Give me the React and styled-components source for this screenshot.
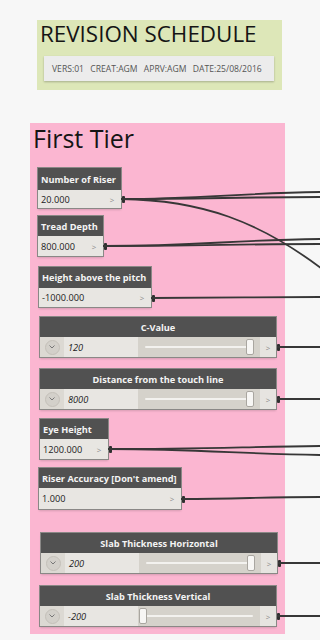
import React from "react";
import styled, { createGlobalStyle } from "styled-components";

const Global = createGlobalStyle`
  html, body { margin: 0; padding: 0; background: #f7f7f7; }
  body { font-family: "Open Sans", "Noto Sans", sans-serif; overflow: hidden; }
`;

const Canvas = styled.div`
  position: relative;
  width: 320px;
  height: 640px;
  overflow: hidden;
  background: #f7f7f7;
  display: flex;
  flex-direction: column;
`;

const Group = styled.section`
  margin-top: ${(p) => p.$top}px;
  margin-left: ${(p) => p.$left}px;
  width: ${(p) => p.$width}px;
  height: ${(p) => p.$height}px;
  flex-shrink: 0;
  background: ${(p) => p.$bg};
  display: flex;
  flex-direction: column;
  box-sizing: border-box;
`;

const GroupTitle = styled.h1`
  margin: ${(p) => p.$margin};
  font-family: "Open Sans", sans-serif;
  font-weight: 400;
  font-size: ${(p) => p.$size}px;
  line-height: ${(p) => p.$lh}px;
  height: ${(p) => p.$lh}px;
  color: #151515;
  white-space: nowrap;
`;

const Note = styled.div`
  margin: ${(p) => p.$top}px 0 0 7px;
  width: 230px;
  height: 25px;
  background: #ececec;
  box-shadow: 0 1px 2px rgba(0, 0, 0, 0.25);
  display: flex;
  align-items: center;
  padding-left: 8px;
  box-sizing: border-box;
  font-family: "Open Sans", sans-serif;
  font-size: 8.6px;
  color: #555;
  word-spacing: 4px;
  white-space: nowrap;
`;

const Node = styled.div`
  margin-top: ${(p) => p.$top}px;
  margin-left: ${(p) => p.$left}px;
  width: ${(p) => p.$width}px;
  display: flex;
  flex-direction: column;
  flex-shrink: 0;
  box-shadow: 0 0 0 1px #8a8886, 0 2px 2px rgba(0, 0, 0, 0.15);
`;

const Header = styled.div`
  height: ${(p) => p.$h || 20}px;
  background: #515151;
  color: #f4f4f4;
  font-family: "Open Sans", sans-serif;
  font-weight: 700;
  font-size: 9.2px;
  display: flex;
  align-items: center;
  justify-content: ${(p) => (p.$center ? "center" : "flex-start")};
  padding-left: ${(p) => (p.$center ? 0 : 3)}px;
  white-space: nowrap;
`;

const Row = styled.div`
  position: relative;
  height: ${(p) => p.$h || 19}px;
  background: #e8e6e2;
  display: flex;
  align-items: center;
  font-family: "Open Sans", sans-serif;
  font-size: 9.2px;
  color: #222;
`;

const ValueText = styled.span`
  flex: 1;
  padding-left: 3px;
`;

const Arrow = styled.span`
  width: ${(p) => p.$w || 18}px;
  align-self: stretch;
  display: flex;
  align-items: center;
  justify-content: center;
  color: #8a8a8a;
  font-size: 8px;
  background: ${(p) => p.$bg || "transparent"};
`;

const Port = styled.span`
  position: absolute;
  right: -4px;
  top: 50%;
  width: 3px;
  height: 7px;
  margin-top: -3px;
  background: #2f2f2f;
  border-radius: 1px;
`;

const Toggle = styled.span`
  width: 24px;
  align-self: stretch;
  background: #dcd9d3;
  display: flex;
  align-items: center;
  justify-content: center;
`;

const Circle = styled.span`
  width: 13px;
  height: 13px;
  border-radius: 50%;
  background: #d3d0ca;
  border: 1px solid #c4c0b9;
  display: flex;
  align-items: center;
  justify-content: center;
`;

const SliderVal = styled.span`
  width: 74px;
  align-self: stretch;
  display: flex;
  align-items: center;
  padding-left: 4px;
  box-sizing: border-box;
  background: #e8e6e2;
  font-style: italic;
`;

const Track = styled.span`
  position: relative;
  flex: 1;
  align-self: stretch;
  background: #d5d2cb;
  display: flex;
  align-items: center;
  padding: 0 7px;
`;

const TrackLine = styled.span`
  flex: 1;
  height: 2px;
  background: #f3f2ef;
  border-radius: 1px;
`;

const Thumb = styled.span`
  position: absolute;
  top: 2px;
  width: 6px;
  height: 14px;
  background: #f7f6f4;
  border: 1px solid #a9a6a0;
  border-radius: 2px;
`;

const Wires = styled.svg`
  position: absolute;
  left: 0;
  top: 0;
  pointer-events: none;
`;

const Chevron = () => (
  <svg width="6" height="4" viewBox="0 0 6 4">
    <path d="M0.5 0.5 L3 3 L5.5 0.5" fill="none" stroke="#777" strokeWidth="1" />
  </svg>
);

function NumberNode({ top, left, width, title, value, h = 20, rh = 19 }) {
  return (
    <Node $top={top} $left={left} $width={width}>
      <Header $h={h}>{title}</Header>
      <Row $h={rh}>
        <ValueText>{value}</ValueText>
        <Arrow>&gt;</Arrow>
        <Port />
      </Row>
    </Node>
  );
}

function SliderNode({ top, left, title, value, pos }) {
  return (
    <Node $top={top} $left={left} $width={236}>
      <Header $h={20} $center>{title}</Header>
      <Row $h={20}>
        <Toggle>
          <Circle>
            <Chevron />
          </Circle>
        </Toggle>
        <SliderVal>{value}</SliderVal>
        <Track>
          <TrackLine />
          <Thumb style={{ left: `${pos}px` }} />
        </Track>
        <Arrow $w={16} $bg="#e6e4e0">&gt;</Arrow>
        <Port />
      </Row>
    </Node>
  );
}

export default function App() {
  const wires = [
    "M121 199 C200 199, 240 193, 320 192",
    "M121 199 C200 199, 245 197, 320 197",
    "M121 199 C200 200, 260 220, 330 275",
    "M103 246 C200 246, 230 240, 320 239",
    "M103 246 C200 246, 240 244, 320 244",
    "M151 298 C230 298, 250 297, 320 297",
    "M277 347 L320 347",
    "M277 399 L320 399",
    "M108 449 C200 449, 240 447, 320 446",
    "M108 449 C200 449, 240 454, 320 455",
    "M181 499 C240 499, 260 497, 320 497",
    "M278 563 L320 563",
    "M277 616 L320 616",
  ];
  return (
    <>
      <Global />
      <Canvas>
        <Group $top={20} $left={37} $width={245} $height={70} $bg="#dde7b8">
          <GroupTitle $size={22.4} $lh={26} $margin="1px 0 0 3px">REVISION SCHEDULE</GroupTitle>
          <Note $top={9}>VERS:01 CREAT:AGM APRV:AGM DATE:25/08/2016</Note>
        </Group>
        <Group $top={33} $left={30} $width={255} $height={511} $bg="#fbb6d1">
          <GroupTitle $size={25} $lh={28} $margin="1px 0 0 3px">First Tier</GroupTitle>
          <NumberNode top={16} left={8} width={83} title="Number of Riser" value="20.000" h={22} rh={18} />
          <NumberNode top={8} left={8} width={65} title="Tread Depth" value="800.000" h={20} rh={20} />
          <NumberNode top={11} left={9} width={112} title="Height above the pitch" value="-1000.000" h={21} rh={19} />
          <SliderNode top={10} left={10} title="C-Value" value="120" pos={108} />
          <SliderNode top={12} left={10} title="Distance from the touch line" value="8000" pos={108} />
          <NumberNode top={10} left={10} width={68} title="Eye Height" value="1200.000" h={20} rh={20} />
          <NumberNode top={9} left={9} width={142} title="Riser Accuracy [Don't amend]" value="1.000" h={20} rh={21} />
          <SliderNode top={24} left={11} title="Slab Thickness Horizontal" value="200" pos={108} />
          <SliderNode top={13} left={10} title="Slab Thickness Vertical" value="-200" pos={1} />
        </Group>
        <Wires width="320" height="640" viewBox="0 0 320 640">
          {wires.map((d, i) => (
            <path key={i} d={d} fill="none" stroke="#373737" strokeWidth="1.8" />
          ))}
        </Wires>
      </Canvas>
    </>
  );
}
